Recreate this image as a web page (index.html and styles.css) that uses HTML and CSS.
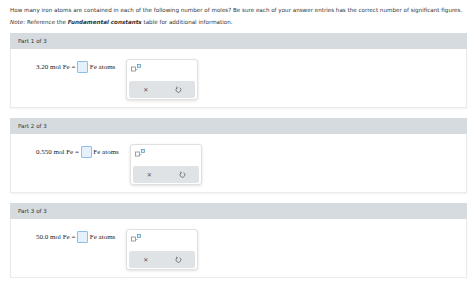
FILE: index.html
```html
<!DOCTYPE html>
<html>
<head>
  <title>Iron Atoms</title>
  <link rel="stylesheet" href="styles.css">
</head>
<body>
  <div class="question">
    <p>How many iron atoms are contained in each of the following number of moles? Be sure each of your answer entries has the correct number of significant figures.</p>
    <p><i>Note</i>: Reference the <b><i>Fundamental constants</i></b> table for additional information.</p>
  </div>

  <div class="part">
    <div class="part-header">Part 1 of 3</div>
    <div class="part-body">
      <div class="equation">3.20 mol Fe = <span class="answer-box"></span> Fe atoms</div>
      <div class="toolbox">
        <div class="tool-top">
          <svg width="10" height="8" viewBox="0 0 10 8"><rect x="0.5" y="3" width="4" height="4" fill="none" stroke="#888" stroke-width="0.8"/><line x1="5" y1="5.5" x2="6.5" y2="5.5" stroke="#888" stroke-width="0.6"/><rect x="6.5" y="0.5" width="3" height="3" fill="#d8ecf7" stroke="#4a90c0" stroke-width="0.7"/></svg>
        </div>
        <div class="tool-bar">
          <span class="tool-btn">&#x2715;</span>
          <span class="tool-btn">
            <svg width="7" height="7" viewBox="0 0 10 10"><path d="M3 2.5 A3.5 3.5 0 1 0 6.5 2.3" fill="none" stroke="#555" stroke-width="1"/><path d="M1.5 1 L3.5 2.6 L1.8 4.2" fill="none" stroke="#555" stroke-width="1"/></svg>
          </span>
        </div>
      </div>
    </div>
  </div>

  <div class="part">
    <div class="part-header">Part 2 of 3</div>
    <div class="part-body">
      <div class="equation">0.550 mol Fe = <span class="answer-box"></span> Fe atoms</div>
      <div class="toolbox">
        <div class="tool-top">
          <svg width="10" height="8" viewBox="0 0 10 8"><rect x="0.5" y="3" width="4" height="4" fill="none" stroke="#888" stroke-width="0.8"/><line x1="5" y1="5.5" x2="6.5" y2="5.5" stroke="#888" stroke-width="0.6"/><rect x="6.5" y="0.5" width="3" height="3" fill="#d8ecf7" stroke="#4a90c0" stroke-width="0.7"/></svg>
        </div>
        <div class="tool-bar">
          <span class="tool-btn">&#x2715;</span>
          <span class="tool-btn">
            <svg width="7" height="7" viewBox="0 0 10 10"><path d="M3 2.5 A3.5 3.5 0 1 0 6.5 2.3" fill="none" stroke="#555" stroke-width="1"/><path d="M1.5 1 L3.5 2.6 L1.8 4.2" fill="none" stroke="#555" stroke-width="1"/></svg>
          </span>
        </div>
      </div>
    </div>
  </div>

  <div class="part">
    <div class="part-header">Part 3 of 3</div>
    <div class="part-body">
      <div class="equation">50.0 mol Fe = <span class="answer-box"></span> Fe atoms</div>
      <div class="toolbox">
        <div class="tool-top">
          <svg width="10" height="8" viewBox="0 0 10 8"><rect x="0.5" y="3" width="4" height="4" fill="none" stroke="#888" stroke-width="0.8"/><line x1="5" y1="5.5" x2="6.5" y2="5.5" stroke="#888" stroke-width="0.6"/><rect x="6.5" y="0.5" width="3" height="3" fill="#d8ecf7" stroke="#4a90c0" stroke-width="0.7"/></svg>
        </div>
        <div class="tool-bar">
          <span class="tool-btn">&#x2715;</span>
          <span class="tool-btn">
            <svg width="7" height="7" viewBox="0 0 10 10"><path d="M3 2.5 A3.5 3.5 0 1 0 6.5 2.3" fill="none" stroke="#555" stroke-width="1"/><path d="M1.5 1 L3.5 2.6 L1.8 4.2" fill="none" stroke="#555" stroke-width="1"/></svg>
          </span>
        </div>
      </div>
    </div>
  </div>
</body>
</html>
```

FILE: styles.css
```css
body {
  margin: 0;
  padding: 4px 7px 0 10px;
  font-family: "DejaVu Sans", Verdana, sans-serif;
  font-size: 5.6px;
  color: #333;
  background-color: #fff;
}

.question p {
  margin: 0;
  line-height: 12px;
}

.part {
  margin-top: 5px;
}

.part + .part {
  margin-top: 10px;
}

.part-header {
  height: 16px;
  line-height: 16px;
  padding-left: 8px;
  background-color: #d5dbde;
  color: #333;
}

.part-body {
  display: flex;
  align-items: flex-start;
  height: 59px;
  box-sizing: border-box;
  padding: 10px 0 0 25px;
  border: 1px solid #ebebeb;
  border-top: none;
  box-shadow: 0 1px 2px rgba(0,0,0,0.05);
}

.equation {
  margin-top: 2px;
  font-family: "Liberation Serif", "Times New Roman", serif;
  font-size: 7px;
  line-height: 12px;
  color: #222;
  white-space: nowrap;
}

.answer-box {
  display: inline-block;
  width: 9px;
  height: 10px;
  vertical-align: middle;
  background-color: #e4f1fa;
  border: 1px solid #8cc0e6;
  border-radius: 1px;
}

.toolbox {
  margin-left: 11px;
  width: 72px;
  height: 41px;
  box-sizing: border-box;
  padding: 2px;
  border: 1px solid #e0e0e0;
  border-radius: 3px;
  background-color: #fff;
  box-shadow: 0 1px 3px rgba(0,0,0,0.12);
}

.tool-top {
  height: 19px;
  padding: 2px 0 0 2px;
  box-sizing: border-box;
}

.tool-bar {
  display: flex;
  height: 17px;
  background-color: #dfe3e6;
  border-radius: 2px;
}

.tool-btn {
  flex: 1;
  display: flex;
  align-items: center;
  justify-content: center;
  font-size: 6px;
  color: #555;
}
```
